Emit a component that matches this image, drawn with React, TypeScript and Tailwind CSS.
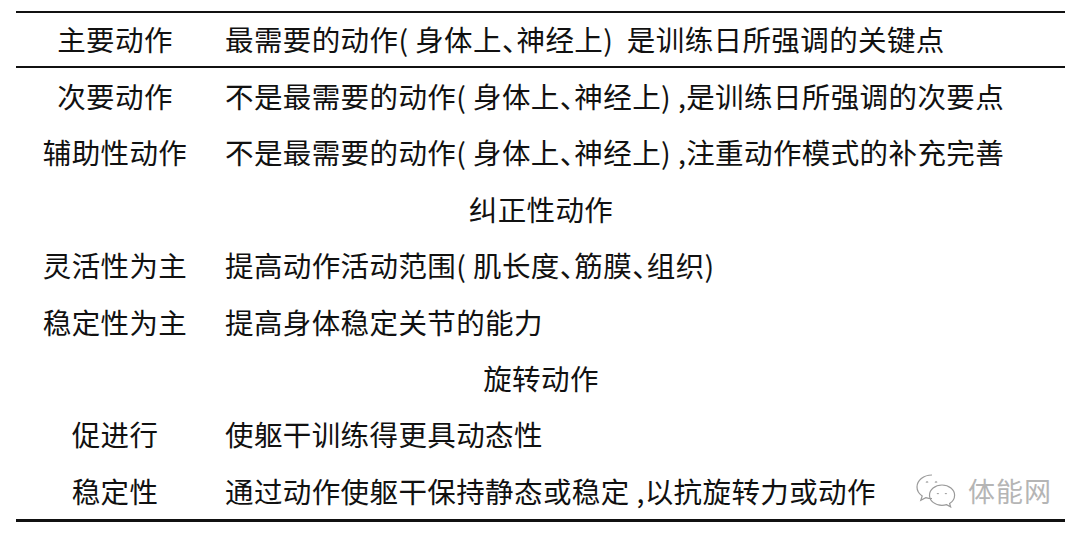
const rows: { kind: 'row' | 'head'; a?: string; b: string }[] = [
  { kind: 'row', a: '次要动作', b: '不是最需要的动作( 身体上、神经上) ,是训练日所强调的次要点' },
  { kind: 'row', a: '辅助性动作', b: '不是最需要的动作( 身体上、神经上) ,注重动作模式的补充完善' },
  { kind: 'head', b: '纠正性动作' },
  { kind: 'row', a: '灵活性为主', b: '提高动作活动范围( 肌长度、筋膜、组织)' },
  { kind: 'row', a: '稳定性为主', b: '提高身体稳定关节的能力' },
  { kind: 'head', b: '旋转动作' },
  { kind: 'row', a: '促进行', b: '使躯干训练得更具动态性' },
  { kind: 'row', a: '稳定性', b: '通过动作使躯干保持静态或稳定 ,以抗旋转力或动作' },
]

function WeChatMark() {
  return (
    <svg width="44" height="36" viewBox="0 0 44 36" fill="none" stroke="#9a9a9a" strokeWidth="1.2">
      <path d="M18 3C9.5 3 3 8.5 3 15c0 3.6 2 6.8 5.2 9l-1.4 4.2 5-2.6c2 .6 4 .9 6.2.9" />
      <path d="M28 13c-7 0-12.5 4.6-12.5 10.2S21 33.4 28 33.4c1.6 0 3.2-.3 4.6-.7l4 2.2-1-3.4c3-1.9 5-4.9 5-8.3C40.6 17.6 35 13 28 13z" />
      <path d="M12 10.5c.6-.8 1.6-.8 2 0M21 10.5c.6-.8 1.6-.8 2 0" />
      <path d="M23 22c.5-.7 1.3-.7 1.7 0M31 22c.5-.7 1.3-.7 1.7 0" />
    </svg>
  )
}

export default function App() {
  return (
    <div
      className="relative w-[1080px] h-[540px] bg-white pt-[11px] px-[16px] text-[#111] text-[28.5px] leading-none tracking-[0.4px] [font-feature-settings:'halt']"
      style={{ fontFamily: '"Noto Sans CJK SC", "Noto Sans", sans-serif' }}
    >
      <div className="border-t-[2px] border-[#111] w-[1049px]">
        {/* header row */}
        <div className="flex items-center h-[55px] border-b-[2px] border-[#111]">
          <div className="w-[198px] text-center">主要动作</div>
          <div className="pl-[11px] whitespace-nowrap">
            最需要的动作( 身体上、神经上)&nbsp;&nbsp;是训练日所强调的关键点
          </div>
        </div>

        <div className="border-b-[3px] border-[#111]">
          {rows.map((r, i) =>
            r.kind === 'head' ? (
              <div key={i} className="flex items-center justify-center h-[56.4px] pl-[1px]">
                {r.b}
              </div>
            ) : (
              <div key={i} className="flex items-center h-[56.4px]">
                <div className="w-[198px] text-center">{r.a}</div>
                <div className="pl-[11px] whitespace-nowrap">{r.b}</div>
              </div>
            )
          )}
        </div>
      </div>

      {/* watermark */}
      <div className="absolute left-[914px] top-[472px] flex items-center gap-[10px] text-[#b5b5b5]">
        <WeChatMark />
        <span className="text-[27px] tracking-[1px]">体能网</span>
      </div>
    </div>
  )
}
